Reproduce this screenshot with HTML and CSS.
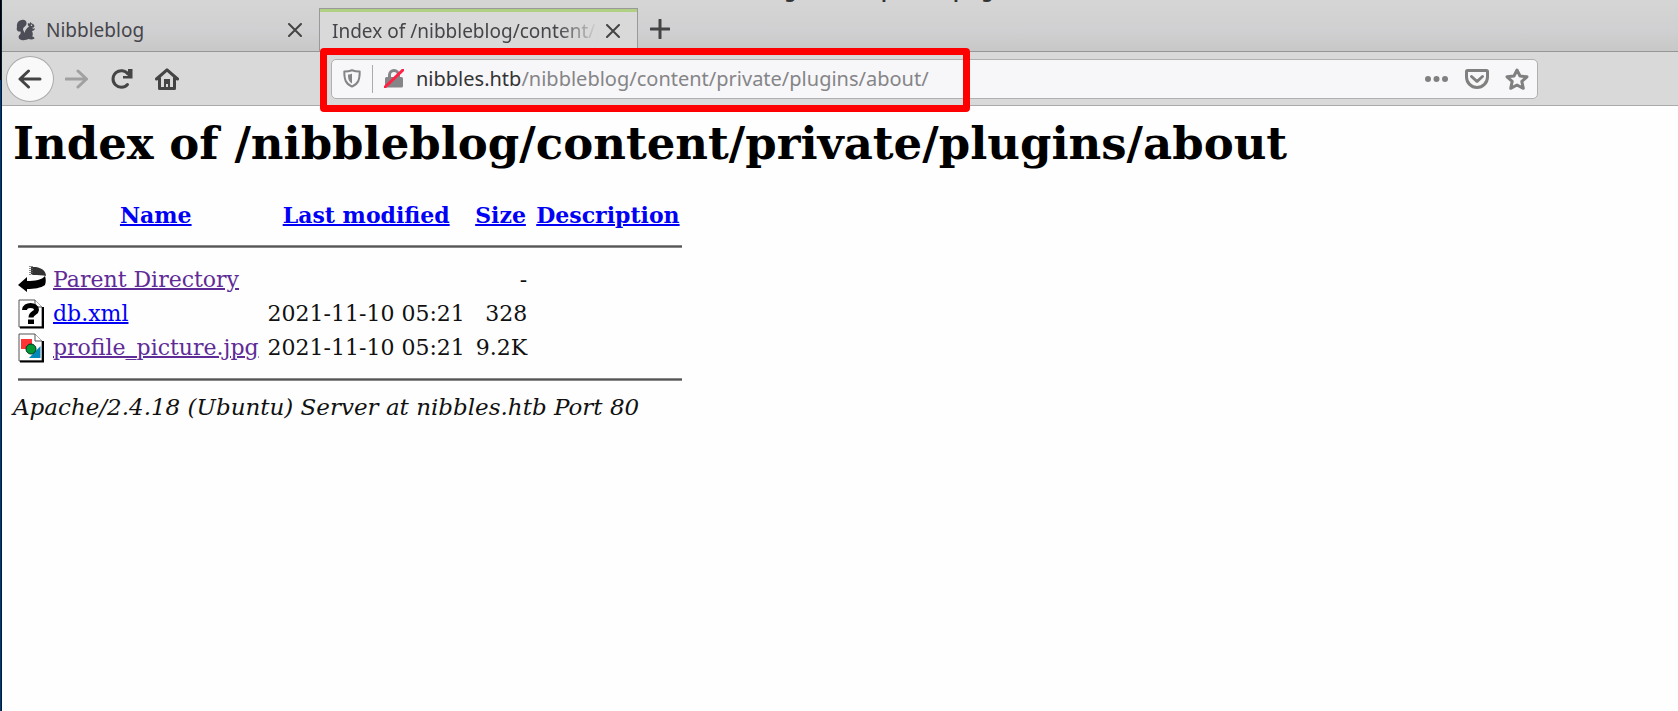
FILE: index.html
```html
<!DOCTYPE html>
<html lang="en">
<head>
<meta charset="utf-8">
<title>Index of /nibbleblog/content/private/plugins/about</title>
<link rel="stylesheet" href="styles.css">
</head>
<body>
<div class="desktop">
<div class="window">
  <header class="chrome">
    <div class="titlebar"><span>Index of /nibbleblog/content/private/plugins/about - Mozilla Firefox</span></div>
    <div class="tabs">
      <div class="tab">
        <svg class="favicon" viewBox="0 0 20 22" aria-hidden="true"><path fill="#4d4d57" d="M5.500 21C3 20.500 2 18.500 3 16.500c1.500-1 2-2 1.500-4C1.500 13 0 11 1 8c-.5-3 .5-5.500 3-6.500C8-.5 11 1.500 10.500 5 10 7.500 7 8 7 10.500L8.500 14c.5-3 2.500-5 4.500-6.500-1.200-.8-1.500-2-1-3.500l1.300.8L14.500 3l1.200 1.500c1.300.2 2.300 1 2.800 2.500-.3 1.300-1.500 1.800-2.500 1.800.8 1 2 1 3 .5-.3 2-1.500 2.700-3 2.700.8 1.500 1.200 3.500.2 5.500 1.500 0 2.300 1 2.300 2-2 1.300-4 1-6 .6-2 1-5 1.400-7 .9z"/><circle cx="15.500" cy="6.200" r=".8" fill="#ddd"/></svg>
        <span class="tab-label">Nibbleblog</span>
        <button class="icon-btn close" aria-label="Close tab"><svg width="14" height="14" viewBox="0 0 14 14"><path d="M1 1l12 12M13 1L1 13"/></svg></button>
      </div>
      <div class="tab active">
        <span class="tab-label">Index of /nibbleblog/content/private</span>
        <button class="icon-btn close" aria-label="Close tab"><svg width="14" height="14" viewBox="0 0 14 14"><path d="M1 1l12 12M13 1L1 13"/></svg></button>
      </div>
      <button class="icon-btn new" aria-label="New tab"><svg width="20" height="20" viewBox="0 0 20 20"><path d="M10 1v18M1 10h18"/></svg></button>
    </div>
    <nav class="toolbar">
      <div class="nav-buttons">
        <button class="icon-btn back" aria-label="Back"><svg width="24" height="20" viewBox="0 0 24 20"><path d="M22 10H2M10.500 2L2 10l8.500 8"/></svg></button>
        <button class="icon-btn forward" aria-label="Forward"><svg width="24" height="20" viewBox="0 0 24 20"><path d="M1 10h20M13 2l8.500 8L13 18"/></svg></button>
        <button class="icon-btn" aria-label="Reload"><svg width="24" height="22" viewBox="0 0 24 22"><path d="M17.500 16.500A8.300 8.300 0 1 1 18 6"/><path class="solid" d="M22.500 1v9.500H13V8h5V1z"/></svg></button>
        <button class="icon-btn" aria-label="Home"><svg width="24" height="22" viewBox="0 0 24 22"><path d="M1.500 11L12 1.800 22.500 11M4.500 10v10.500h15V10"/><path class="solid" d="M9 20v-9h6v9h-2v-4h-2v4z"/></svg></button>
      </div>
      <div class="address">
        <svg class="shield" viewBox="0 0 18 19" aria-hidden="true"><path d="M9 1.300C6.500 2.300 4 2.600 1.300 2.600c0 8 1.200 12 7.700 15 6.500-3 7.700-7 7.700-15C14 2.600 11.500 2.300 9 1.300z"/><path class="solid" d="M9 4.500v10C6 12.500 5 10.500 5 5.500c1.500 0 3-.3 4-1z"/></svg>
        <span class="divider"></span>
        <svg class="lock" viewBox="0 0 20 19" aria-hidden="true"><path d="M5.500 9V6a4.500 4.500 0 0 1 9 0v3"/><path class="solid" d="M2.500 8h15q1.500 0 1.500 1.500V17q0 1.500-1.500 1.500h-15Q1 18.500 1 17V9.500Q1 8 2.500 8z"/><path class="slash" d="M1 18L19 1"/></svg>
        <label class="url" for="url"><b>nibbles.htb</b>/nibbleblog/content/private/plugins/about/</label>
        <input id="url" class="url-input" type="text" aria-label="Address">
        <button class="icon-btn" aria-label="Page actions"><svg width="24" height="20" viewBox="0 0 24 20"><path class="solid" d="M0 10a3 3 0 1 0 6 0 3 3 0 1 0-6 0M8.500 10a3 3 0 1 0 6 0 3 3 0 1 0-6 0M17 10a3 3 0 1 0 6 0 3 3 0 1 0-6 0"/></svg></button>
        <button class="icon-btn" aria-label="Save to Pocket"><svg width="24" height="20" viewBox="0 0 24 20"><path d="M2.500 1.500h19q1 0 1 1V8a10.500 10.500 0 0 1-21 0V2.500q0-1 1-1zM6.500 7.500L12 12.500l5.500-5"/></svg></button>
        <button class="icon-btn" aria-label="Bookmark"><svg width="24" height="22" viewBox="0 0 24 22"><path d="M12 2l3 6 7 .8-5.200 4.600 1.500 6.900L12 17l-6.300 3.300 1.500-6.900L2 8.800 9 8z"/></svg></button>
      </div>
      <div class="spacer"></div>
    </nav>
  </header>
  <main class="page">
    <h1>Index of /nibbleblog/content/private/plugins/about</h1>
    <table class="listing">
      <thead>
        <tr class="head"><th></th><th><a href="#">Name</a></th><th><a href="#">Last modified</a></th><th><a href="#">Size</a></th><th><a href="#">Description</a></th></tr>
        <tr class="rule top"><td colspan="5"><hr></td></tr>
      </thead>
      <tbody>
        <tr><td><svg class="file" viewBox="0 0 28 30" role="img" aria-label="Parent directory"><path fill="#333" d="M13 2h5c6 1 10 4 10 9-3-1-8-1-13-1l-2-1z"/><path d="M12 1v9M14 1v7" stroke="#666" stroke-width="1.500" stroke-dasharray="1 1"/><path d="M0 20l9-8v4c8 0 15-1 18-5 1 3 1 6 0 9-4 3-11 4-18 4v3z"/></svg></td><td><a class="visited" href="#">Parent Directory</a></td><td></td><td class="size">-</td><td></td></tr>
        <tr><td><svg class="file" viewBox="0 0 28 30" role="img" aria-label="Unknown file"><path class="sheet" d="M1 1h16l7 7v20H1z"/><path class="shade" d="M2 28.500h23V8"/><path class="sheet" d="M17 1v7h7"/><path d="M6.500 11c0-6 12-6 12 0 0 3-5.500 3-5.500 7.500" fill="none" stroke="#000" stroke-width="5"/><path d="M10 20.500h6V25h-6z"/></svg></td><td><a href="#">db.xml</a></td><td>2021-11-10 05:21</td><td class="size">328</td><td></td></tr>
        <tr><td><svg class="file" viewBox="0 0 28 30" role="img" aria-label="Image"><path class="sheet" d="M1 1h16l7 7v20H1z"/><path class="shade" d="M2 28.500h23V8"/><path class="sheet" d="M17 1v7h7"/><path fill="#f33" d="M3 6h11v10H3z"/><path fill="#08b" d="M22.500 13v12H11z"/><circle cx="13" cy="16" r="5" fill="#093" stroke="#032" stroke-width="1"/></svg></td><td><a class="visited" href="#">profile_picture.jpg</a></td><td>2021-11-10 05:21</td><td class="size">9.2K</td><td></td></tr>
        <tr class="rule bottom"><td colspan="5"><hr></td></tr>
      </tbody>
    </table>
    <address class="server">Apache/2.4.18 (Ubuntu) Server at nibbles.htb Port 80</address>
  </main>
  <div class="highlight"></div>
</div>
</div>
</body>
</html>
```

FILE: styles.css
```css
* { box-sizing: border-box; }
body { margin: 0; }
.desktop {
  min-height: 100vh;
  padding-left: 2px;
  display: flex;
  background: linear-gradient(#000 80px, #003c78 80px);
}
.window {
  position: relative;
  flex: 1;
  min-width: 0;
  background: #fefefe;
  box-shadow: -1px 0 0 #001a38;
}
.chrome { font: 19px/28px "Noto Sans", sans-serif; color: #45454a; }
.titlebar {
  height: 3px;
  overflow: hidden;
  display: flex;
  justify-content: center;
  align-items: flex-end;
  padding-left: 160px;
  background: #d5d5d5;
  color: #333;
  font-size: 18px;
  line-height: 24px;
  font-weight: bold;
}
.tabs {
  display: flex;
  height: 49px;
  padding-top: 5px;
  background: linear-gradient(#d5d5d5, #d0cfd1 60%, #c8c8c8);
  border-bottom: 1px solid #969696;
}
.tab {
  display: flex;
  align-items: center;
  width: 317px;
  padding: 0 17px 0 14px;
}
.tab.active {
  width: 319px;
  height: 44px;
  padding-left: 12px;
  background: #d9d9d9;
  border: 1px solid #999;
  border-bottom: 0;
  box-shadow: inset 0 3px #b0d083;
}
.favicon { width: 20px; height: 22px; margin-right: 10px; }
.tab-label { flex: 1; overflow: hidden; white-space: nowrap; }
.active .tab-label {
  margin-right: 8px;
  -webkit-mask-image: linear-gradient(to right, #000 85%, transparent);
  mask-image: linear-gradient(to right, #000 85%, transparent);
}
.icon-btn {
  display: flex;
  align-items: center;
  justify-content: center;
  flex: none;
  padding: 0;
  border: 0;
  background: none;
  color: #444;
}
.chrome svg { flex: none; }
.icon-btn path, .shield path, .lock path {
  fill: none;
  stroke: currentColor;
  stroke-width: 3;
  stroke-linecap: round;
  stroke-linejoin: round;
}
.chrome .solid { fill: currentColor; stroke: none; }
.close path { stroke-width: 2; }
.new { width: 44px; height: 42px; }
.toolbar {
  display: flex;
  align-items: center;
  height: 54px;
  background: #d9d9d9;
  border-bottom: 1px solid #aaa;
}
.nav-buttons { display: flex; align-items: center; gap: 21px; width: 329px; padding-left: 4px; }
.back {
  width: 48px;
  height: 46px;
  margin-right: -10px;
  border: 1px solid #aaa;
  border-radius: 50%;
  background: #f9f9f9;
}
.forward { color: #a0a0a0; }
.address {
  display: flex;
  align-items: center;
  flex: 1;
  height: 40px;
  padding: 0 8px 0 11px;
  border: 1px solid #b0b0b0;
  border-radius: 5px;
  background: #f7f6f9;
  color: #858587;
}
.address .icon-btn { margin-left: 16px; color: #808080; }
.shield { width: 18px; height: 19px; }
.shield path { stroke-width: 2; }
.divider { width: 1px; height: 28px; margin: 0 11px; background: #aaa; }
.lock { width: 20px; height: 19px; margin-right: 12px; }
.chrome .lock .slash { stroke: #f24; }
.url { white-space: nowrap; font-size: 20px; }
.url b { font-weight: normal; color: #333; }
.url-input { flex: 1; min-width: 0; height: 30px; border: 0; outline: 0; background: none; }
.spacer { width: 140px; }
.page { padding: 0 11px; font: 23px/28px "DejaVu Serif", serif; color: #111; }
h1 { margin: 0 0 26px; padding-top: 12px; font-size: 45px; line-height: 52px; color: #000; }
.listing { border-spacing: 5px 0; font-size: 22px; white-space: nowrap; }
.listing td, .listing th { padding: 0 2px; height: 34px; }
.listing td:first-child { padding: 0; }
.listing .head th { height: 38px; }
.listing a { color: #0000f5; text-decoration-thickness: 2px; }
.listing a.visited { color: #5e2b97; }
.listing .size { padding-left: 4px; text-align: right; }
.listing .top td { height: 29px; padding-top: 11px; vertical-align: top; }
.listing .bottom td { height: 28px; }
hr { margin: 0; height: 3px; border: solid #888; border-width: 1px 0; background: #555; }
.file { display: block; width: 28px; height: 30px; }
.sheet { fill: #fff; stroke: #555; stroke-width: 1; }
.shade { fill: none; stroke: #000; stroke-width: 2; }
.server { font-style: italic; }
.highlight {
  position: absolute;
  left: 318px;
  top: 48px;
  width: 650px;
  height: 64px;
  border: 7px solid #f00;
  border-radius: 4px;
  pointer-events: none;
}
```
